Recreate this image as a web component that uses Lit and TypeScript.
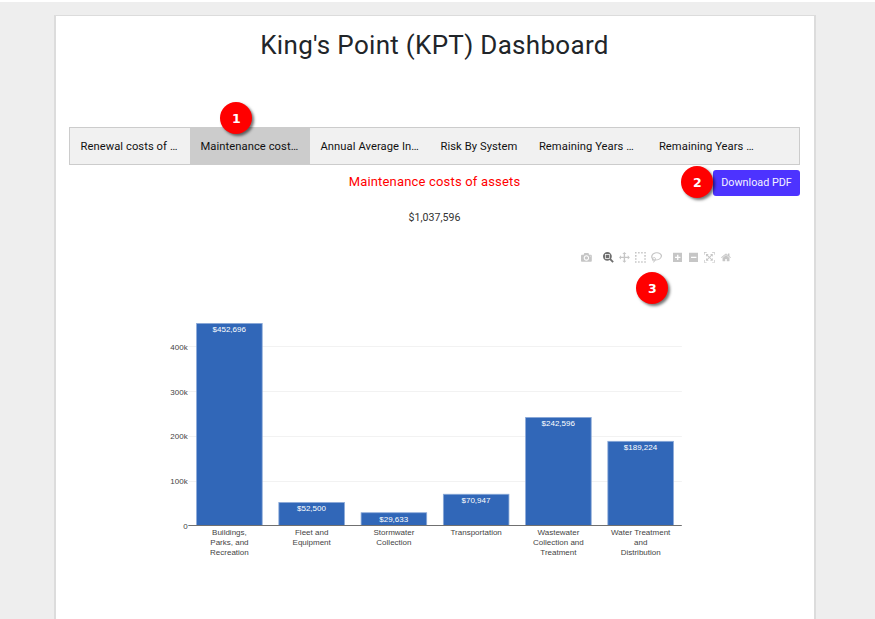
import { LitElement, html, svg, css } from "lit";
import { customElement, property } from "lit/decorators.js";

interface Icon { w: number; d: string; active?: boolean }

const ICONS: Record<string, Icon> = {
  camera: { w: 1000, d: "m500 450c-83 0-150-67-150-150 0-83 67-150 150-150 83 0 150 67 150 150 0 83-67 150-150 150z m400 150h-120c-16 0-34 13-39 29l-31 93c-6 15-23 28-40 28h-340c-16 0-34-13-39-28l-31-94c-6-15-23-28-40-28h-120c-55 0-100-45-100-100v-450c0-55 45-100 100-100h800c55 0 100 45 100 100v450c0 55-45 100-100 100z m-400-550c-138 0-250 112-250 250 0 138 112 250 250 250 138 0 250-112 250-250 0-138-112-250-250-250z m365 380c-19 0-35 16-35 35 0 19 16 35 35 35 19 0 35-16 35-35 0-19-16-35-35-35z" },
  zoom: { w: 1000, active: true, d: "m1000-25l-250 251c40 63 63 138 63 218 0 224-182 406-407 406-224 0-406-182-406-406s183-406 407-406c80 0 155 22 218 62l250-250 125 125z m-812 250l0 438 437 0 0-438-437 0z m62 375l313 0 0-312-313 0 0 312z" },
  pan: { w: 1000, d: "m1000 350l-187 188 0-125-250 0 0 250 125 0-188 187-187-187 125 0 0-250-250 0 0 125-188-188 186-187 0 125 252 0 0-250-125 0 187-188 188 188-125 0 0 250 250 0 0-126 187 188z" },
  select: { w: 1000, d: "m0 850l0-143 143 0 0 143-143 0z m286 0l0-143 143 0 0 143-143 0z m285 0l0-143 143 0 0 143-143 0z m286 0l0-143 143 0 0 143-143 0z m-857-286l0-143 143 0 0 143-143 0z m857 0l0-143 143 0 0 143-143 0z m-857-285l0-143 143 0 0 143-143 0z m857 0l0-143 143 0 0 143-143 0z m-857-286l0-143 143 0 0 143-143 0z m286 0l0-143 143 0 0 143-143 0z m285 0l0-143 143 0 0 143-143 0z m286 0l0-143 143 0 0 143-143 0z" },
  lasso: { w: 1031, d: "m1018 538c-36 207-290 336-568 286-277-48-473-256-436-463 10-57 36-108 76-151-13-66 11-137 68-183 34-28 75-41 114-42l-55-70 0 0c-2-1-3-2-4-3-10-14-8-34 5-45 14-11 34-8 45 4 1 1 2 3 2 5l0 0 113 140c16 11 31 24 45 40 4 3 6 7 8 11 48-3 100 0 151 9 278 48 473 255 436 462z m-624-379c-80 14-149 48-197 96 42 42 109 47 156 9 33-26 47-66 41-105z m-187-74c-19 16-33 37-39 60 50-32 109-55 174-68-42-25-95-24-135 8z m360 75c-34-7-69-9-102-8 8 62-16 128-68 170-73 59-175 54-244-5-9 20-16 40-20 61-28 159 121 317 333 354s407-60 434-217c28-159-121-318-333-355z" },
  plus: { w: 875, d: "m1 787l0-875 875 0 0 875-875 0z m687-500l-187 0 0-187-125 0 0 187-188 0 0 125 188 0 0 187 125 0 0-187 187 0 0-125z" },
  minus: { w: 875, d: "m0 788l0-876 875 0 0 876-875 0z m688-500l-500 0 0 125 500 0 0-125z" },
  autoscale: { w: 1000, d: "m250 850l-187 0-63 0 0-62 0-188 63 0 0 188 187 0 0 62z m688 0l-188 0 0-62 188 0 0-188 62 0 0 188 0 62-62 0z m-875-938l0 188-63 0 0-188 0-62 63 0 187 0 0 62-187 0z m875 188l0-188-188 0 0-62 188 0 62 0 0 62 0 188-62 0z m-125 188l-1 0-93-94-156 156 156 156 92-93 2 0 0 250-250 0 0-2 93-92-156-156-156 156 94 92 0 2-250 0 0-250 0 0 93 93 157-156-157-156-93 94 0 0 0-250 250 0 0 0-94 93 156 157 156-157-93-93 0 0 250 0 0 250z" },
  home: { w: 928.6, d: "m786 296v-267q0-15-11-26t-25-10h-214v214h-143v-214h-214q-15 0-25 10t-11 26v267q0 1 0 2t0 2l321 264 321-264q1-1 1-4z m124 39l-34-41q-5-5-12-6h-2q-7 0-12 3l-386 322-386-322q-7-4-13-4-7 2-12 7l-35 41q-4 5-3 13t6 12l401 334q18 15 42 15t43-15l136-114v109q0 8 5 13t13 5h107q8 0 13-5t5-13v-227l122-102q5-5 6-12t-4-13z" },
};

const GROUPS = [["camera"], ["zoom", "pan", "select", "lasso"], ["plus", "minus", "autoscale", "home"]];

@customElement("mode-bar")
export class ModeBar extends LitElement {
  static styles = css`
    :host { display: flex; }
    .group { display: flex; }
    .group:first-child { margin-right: 5.7px; }
    .group:last-child { margin-left: 4.8px; }
    .icon { width: 16.1px; height: 11px; display: flex; justify-content: center; }
    svg { height: 10.8px; display: block; fill: #c6c6c6; }
    .active svg { fill: #6f6f6f; }
  `;
  render() {
    return GROUPS.map((g) => html`<div class="group">${g.map((k) => {
      const i = ICONS[k];
      return html`<span class=${i.active ? "icon active" : "icon"}>
        <svg viewBox="0 0 ${i.w} 1000"><path transform="matrix(1 0 0 -1 0 850)" d=${i.d}></path></svg></span>`;
    })}</div>`);
  }
}

const DATA: { value: number; label: string[] }[] = [
  { value: 452696, label: ["Buildings,", "Parks, and", "Recreation"] },
  { value: 52500, label: ["Fleet and", "Equipment"] },
  { value: 29633, label: ["Stormwater", "Collection"] },
  { value: 70947, label: ["Transportation"] },
  { value: 242596, label: ["Wastewater", "Collection and", "Treatment"] },
  { value: 189224, label: ["Water Treatment", "and", "Distribution"] },
];

@customElement("cost-chart")
export class CostChart extends LitElement {
  static styles = css`
    :host { display: block; }
    svg { display: block; font-family: "Liberation Sans", Arial, sans-serif; font-size: 8px; }
    .grid { stroke: #f2f2f2; }
    .axis { stroke: #707070; }
    .tick { fill: #444; text-anchor: end; }
    .label { fill: #444; text-anchor: middle; }
    .bar { fill: #3167b8; stroke: #8aa9d8; stroke-width: 0.8; }
    .value { fill: #fff; text-anchor: middle; }
  `;
  render() {
    const left = 28.3, base = 215.5, step = 82.25, per = 44.75 / 100000;
    return html`<svg width="540" height="260" viewBox="0 0 540 260">
      ${[1, 2, 3, 4].map((n) => svg`<line class="grid" x1=${left} x2=${left + step * 6} y1=${Math.floor(base - n * 44.75 + 0.3) + 0.5} y2=${Math.floor(base - n * 44.75 + 0.3) + 0.5}></line>`)}
      ${[0, 1, 2, 3, 4].map((n) => svg`<text class="tick" x="27.7" y=${base + 3.3 - n * 44.75}>${n ? `${n}00k` : "0"}</text>`)}
      ${DATA.map((d, i) => {
        const h = d.value * per - 0.5, x = left + step * i + 8.3, c = left + step * (i + 0.5);
        return svg`<rect class="bar" x=${x} y=${base - h} width="65.6" height=${h}></rect>
          <text class="value" x=${c - 0.2} y=${base - h + 8.9}>$${d.value.toLocaleString("en-US")}</text>
          ${d.label.map((t, j) => svg`<text class="label" x=${c} y=${225 + j * 10}>${t}</text>`)}`;
      })}
      <line class="axis" x1=${left} x2=${left + step * 6} y1=${base} y2=${base}></line>
    </svg>`;
  }
}

@customElement("step-marker")
export class StepMarker extends LitElement {
  @property() n = "";
  static styles = css`
    :host { display: flex; align-items: center; justify-content: center; width: 32px; height: 32px;
      border-radius: 50%; background: #f00; color: #fff; box-shadow: 2px 2px 3px rgba(0, 0, 0, 0.55);
      font: bold 12.5px "DejaVu Sans", sans-serif; }
  `;
  render() { return html`${this.n}`; }
}

const TABS = [
  { text: "Renewal costs of …", width: 120 },
  { text: "Maintenance cost…", width: 120 },
  { text: "Annual Average In…", width: 120 },
  { text: "Risk By System", width: 98.4 },
  { text: "Remaining Years …", width: 120 },
  { text: "Remaining Years …", width: 120 },
];

@customElement("app-root")
export class AppRoot extends LitElement {
  static styles = css`
    :host { display: block; box-sizing: border-box; height: 619px; overflow: hidden; background: #eee;
      border-top: 2px solid #fff; padding: 13px 59px 0 54px; font-family: Roboto, sans-serif; }
    .card { position: relative; box-sizing: border-box; height: 604px; background: #fff;
      border: 2px solid #dcdcdc; border-top-width: 1px; border-bottom: 0; padding: 0 14px 0 13px; }
    h1 { margin: 0; padding-top: 12px; height: 99px; text-align: center; font-weight: 400; font-size: 26px;
      line-height: 34px; color: #212529; letter-spacing: 0.3px; }
    .tabs { display: flex; box-sizing: border-box; height: 38px; background: #f1f1f1; border: 1px solid #ccc; }
    .tab { box-sizing: border-box; padding-left: 10.5px; font-size: 11.2px; line-height: 37px; letter-spacing: 0.07px; color: #111; white-space: nowrap; }
    .tab.on { background: #ccc; }
    .bar { display: grid; grid-template-columns: 1fr auto 1fr; padding-top: 5px; }
    .bar h2 { grid-column: 2; margin: 0; font-weight: 400; font-size: 13px; line-height: 23px; color: #f00; letter-spacing: 0.18px; }
    .download { justify-self: end; width: 87px; height: 26px; border: 0; padding: 0 0 1px; border-radius: 3px; background: #4d33ff;
      color: #f4f2ff; font: 10.8px/24px Roboto, sans-serif; }
    .total { margin-top: 14px; text-align: center; font-size: 10.6px; line-height: 16px; color: #333; }
    mode-bar { margin: 26px 0 0 509.3px; }
    cost-chart { margin: 47px 0 0 91px; }
    step-marker { position: absolute; }
    .m1 { left: 164.4px; top: 86.4px; }
    .m2 { left: 625.4px; top: 150.4px; }
    .m3 { left: 580.4px; top: 256.4px; }
  `;
  render() {
    return html`<main class="card">
      <h1>King's Point (KPT) Dashboard</h1>
      <nav class="tabs">${TABS.map((t, i) => html`<div class=${i === 1 ? "tab on" : "tab"} style="width:${t.width}px">${t.text}</div>`)}</nav>
      <div class="bar"><h2>Maintenance costs of assets</h2><button class="download">Download PDF</button></div>
      <div class="total">$1,037,596</div>
      <mode-bar></mode-bar>
      <cost-chart></cost-chart>
      <step-marker class="m1" n="1"></step-marker>
      <step-marker class="m2" n="2"></step-marker>
      <step-marker class="m3" n="3"></step-marker>
    </main>`;
  }
}
